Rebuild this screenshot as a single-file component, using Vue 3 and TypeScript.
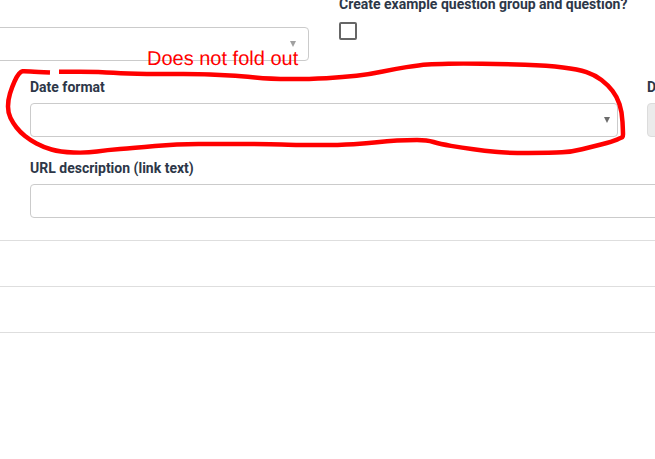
<script setup lang="ts">
const dividers: number[] = [1, 2, 3];

type Pt = [number, number];

const lowerLoop: Pt[] = [
  [50, 72.5], [37, 72], [24, 71], [21, 71.5], [17, 76], [12, 87], [8, 100], [8, 113], [13, 123], [20, 132],
  [30, 140], [43, 147], [60, 152], [87, 153], [107, 150], [133, 148], [177, 144], [220, 144], [270, 144],
  [293, 145], [340, 145], [367, 143.3], [387, 141], [407, 140], [427, 140], [440, 144], [462, 147.7], [485, 150.7],
  [505, 153], [552, 153], [572, 151.7], [592, 146.7], [612, 141.7], [622, 137.5], [623, 136.7], [623, 132], [622, 111.7],
  [617, 96.7], [608, 85], [595, 75], [578, 69.3], [548, 65.7], [502, 64], [462, 63.5], [435, 64], [420, 65],
  [393, 69.3], [370, 74.3], [343, 77.3], [310, 79], [270, 79], [240, 76], [220, 75], [200, 74], [167, 74], [127, 74],
  [100, 71.7], [59, 71.7],
];

// smooth the hand drawn line through the midpoints
function smooth(pts: Pt[]): string {
  let d = `M${pts[0][0]} ${pts[0][1]}`;
  for (let i = 1; i < pts.length - 1; i++) {
    const mx = (pts[i][0] + pts[i + 1][0]) / 2;
    const my = (pts[i][1] + pts[i + 1][1]) / 2;
    d += ` Q${pts[i][0]} ${pts[i][1]} ${mx} ${my}`;
  }
  const last = pts[pts.length - 1];
  return `${d} L${last[0]} ${last[1]}`;
}

const scribblePath = smooth(lowerLoop);
</script>

<template>
  <div class="page">
    <div class="top-row">
      <div class="top-left">
        <div class="select">
          <span class="caret caret-light"></span>
        </div>
      </div>
      <div class="top-right">
        <label class="field-label">Create example question group and question?</label>
        <span class="checkbox"></span>
      </div>
    </div>

    <div class="date-row">
      <div class="date-field">
        <label class="field-label">Date format</label>
        <div class="select">
          <span class="caret"></span>
        </div>
      </div>
      <div class="side-field">
        <label class="field-label">Decimal mark</label>
        <div class="select disabled"></div>
      </div>
    </div>

    <div class="url-field">
      <label class="field-label">URL description (link text)</label>
      <div class="select"></div>
    </div>

    <div class="rows">
      <div v-for="d in dividers" :key="d" class="row"></div>
    </div>

    <svg class="scribble" width="655" height="459" viewBox="0 0 655 459">
      <path :d="scribblePath" fill="none" stroke="#ff0000" stroke-width="4.5" stroke-linejoin="round" stroke-linecap="butt" />
    </svg>
    <span class="note">Does not fold out</span>
  </div>
</template>

<style scoped>
.page {
  position: relative;
  width: 655px;
  height: 459px;
  overflow: hidden;
  background: #fff;
  font-family: Roboto, "Liberation Sans", sans-serif;
  color: #2d3748;
}

.top-row {
  display: flex;
  margin-top: -6px;
  margin-left: -40px;
  height: 87px;
}

.top-left {
  width: 349px;
  padding-top: 33px;
  flex-shrink: 0;
}

.top-right {
  margin-left: 30px;
  width: 330px;
  flex-shrink: 0;
}

.field-label {
  display: block;
  font-size: 14px;
  font-weight: 700;
  line-height: 21px;
  white-space: nowrap;
}

.select {
  position: relative;
  height: 34px;
  box-sizing: border-box;
  border: 1px solid #cbcbcb;
  border-radius: 4px;
  background: #fff;
}

.caret {
  position: absolute;
  top: 13px;
  right: 7px;
  border-left: 3.5px solid transparent;
  border-right: 3.5px solid transparent;
  border-top: 6px solid #6c6c6c;
}

.caret-light {
  right: 12px;
  border-top-color: #a0a0a0;
}

.checkbox {
  display: block;
  width: 18px;
  height: 18px;
  box-sizing: border-box;
  margin-top: 7px;
  border: 2px solid #666;
  border-radius: 2px;
}

.date-row {
  display: flex;
  gap: 29px;
  margin-left: 30px;
  margin-top: -4px;
  height: 81px;
}

.date-field {
  width: 588px;
  flex-shrink: 0;
}

.field-label + .select {
  margin-top: 5px;
}

.side-field {
  width: 300px;
  flex-shrink: 0;
}

.disabled {
  border-color: #dcdcdc;
  background: #ebebeb;
}

.url-field {
  margin-left: 30px;
  width: 800px;
}

.rows {
  margin-top: 22px;
}

.row {
  height: 46px;
  box-sizing: border-box;
  border-top: 1px solid #dedede;
}

.scribble {
  position: absolute;
  top: 0;
  left: 0;
  pointer-events: none;
}

.note {
  position: absolute;
  left: 147px;
  top: 47px;
  font-family: "Liberation Sans", Arial, sans-serif;
  font-size: 20px;
  line-height: 24px;
  color: #ff0000;
  text-rendering: geometricPrecision;
  white-space: nowrap;
}
</style>
